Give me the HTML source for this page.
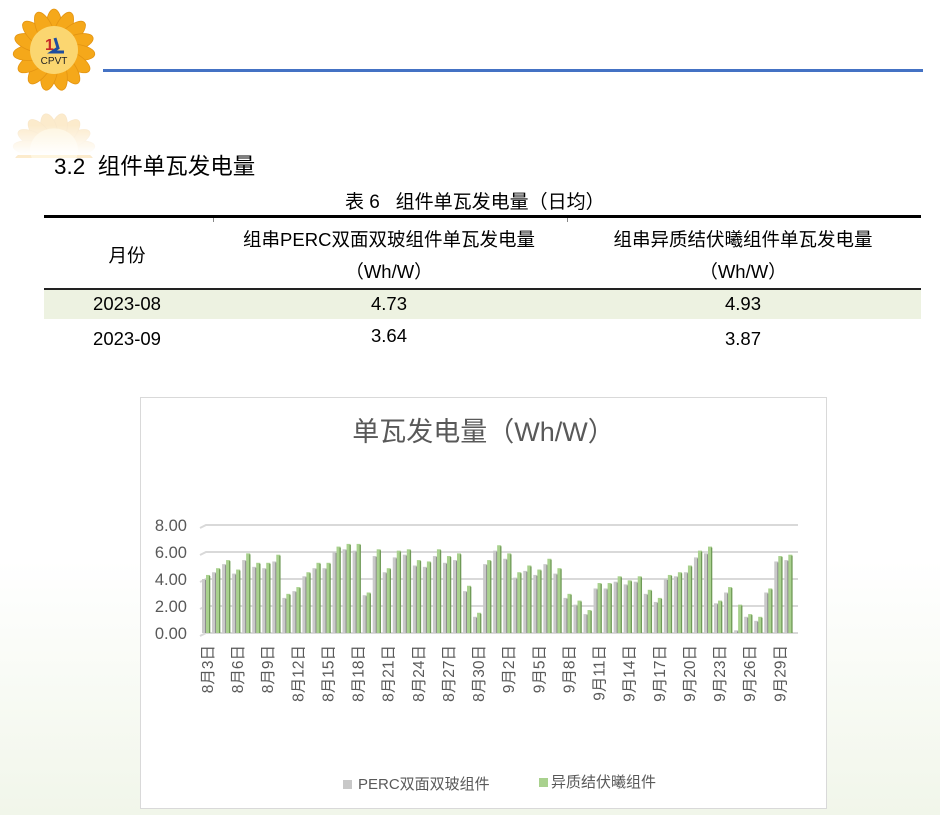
<!DOCTYPE html>
<html><head><meta charset="utf-8"><style>
body{margin:0;width:940px;height:815px;overflow:hidden;position:relative;font-family:"Liberation Sans","Noto Sans CJK SC",sans-serif;background:linear-gradient(#fff 0,#fff 560px,#f1f6ea 815px);}
.a{position:absolute;white-space:nowrap}
</style></head><body>
<svg class="a" style="left:10px;top:8px" width="92" height="150" viewBox="0 0 92 150">
<defs><g id="fl">
<g fill="#f5a81a" stroke="#e39412" stroke-width="0.8">
<ellipse rx="8" ry="19" transform="rotate(0) translate(0,-22)"/><ellipse rx="8" ry="19" transform="rotate(24) translate(0,-22)"/><ellipse rx="8" ry="19" transform="rotate(48) translate(0,-22)"/><ellipse rx="8" ry="19" transform="rotate(72) translate(0,-22)"/><ellipse rx="8" ry="19" transform="rotate(96) translate(0,-22)"/><ellipse rx="8" ry="19" transform="rotate(120) translate(0,-22)"/><ellipse rx="8" ry="19" transform="rotate(144) translate(0,-22)"/><ellipse rx="8" ry="19" transform="rotate(168) translate(0,-22)"/><ellipse rx="8" ry="19" transform="rotate(192) translate(0,-22)"/><ellipse rx="8" ry="19" transform="rotate(216) translate(0,-22)"/><ellipse rx="8" ry="19" transform="rotate(240) translate(0,-22)"/><ellipse rx="8" ry="19" transform="rotate(264) translate(0,-22)"/><ellipse rx="8" ry="19" transform="rotate(288) translate(0,-22)"/><ellipse rx="8" ry="19" transform="rotate(312) translate(0,-22)"/><ellipse rx="8" ry="19" transform="rotate(336) translate(0,-22)"/>
</g>
<circle r="24" fill="#fbd670"/></g></defs>
<g transform="translate(44,42)"><use href="#fl"/>
<text x="-9" y="0" font-size="16" font-weight="bold" fill="#c62828" font-family="Liberation Sans">1</text>
<path d="M1,-12 L4,-2 L-2,2 L10,2" stroke="#1f4e9e" stroke-width="3" fill="none"/>
<text x="0" y="14" font-size="10" text-anchor="middle" fill="#222" font-family="Liberation Sans">CPVT</text>
</g>
<g transform="translate(44,142) scale(1,-0.9)" opacity="0.22"><use href="#fl"/></g>
<rect x="0" y="118" width="92" height="40" fill="url(#none)" opacity="0"/>
</svg>
<div class="a" style="left:0;top:125px;width:110px;height:30px;background:linear-gradient(rgba(255,255,255,0),#fff)"></div>
<div class="a" style="left:103px;top:69px;width:820px;height:3px;background:#4472c4"></div>
<div class="a" style="left:54px;top:149px;font-size:22.5px;color:#000">3.2&nbsp; 组件单瓦发电量</div>
<div class="a" style="left:345px;top:187px;font-size:19px">表 6 &nbsp; 组件单瓦发电量（日均）</div>
<div class="a" style="left:44px;top:215px;width:877px;height:3px;background:#000"></div>
<div class="a" style="left:44px;top:288px;width:877px;height:2px;background:#222"></div>
<div class="a" style="left:44px;top:290px;width:877px;height:29px;background:#edf2e1"></div>
<div class="a" style="left:213px;top:218px;width:1px;height:4px;background:#888"></div>
<div class="a" style="left:567px;top:218px;width:1px;height:4px;background:#888"></div>
<div class="a" style="left:84px;top:242px;width:86px;text-align:center;font-size:18.5px">月份</div>
<div class="a" style="left:214px;top:224px;width:350px;text-align:center;font-size:18.5px;line-height:32px">组串PERC双面双玻组件单瓦发电量<br>（Wh/W）</div>
<div class="a" style="left:568px;top:224px;width:350px;text-align:center;font-size:18.5px;line-height:32px">组串异质结伏曦组件单瓦发电量<br>（Wh/W）</div>
<div class="a" style="left:84px;top:293px;width:86px;text-align:center;font-size:18.5px">2023-08</div>
<div class="a" style="left:84px;top:328px;width:86px;text-align:center;font-size:18.5px">2023-09</div>
<div class="a" style="left:214px;top:293px;width:350px;text-align:center;font-size:18.5px">4.73</div>
<div class="a" style="left:214px;top:325px;width:350px;text-align:center;font-size:18.5px">3.64</div>
<div class="a" style="left:568px;top:293px;width:350px;text-align:center;font-size:18.5px">4.93</div>
<div class="a" style="left:568px;top:328px;width:350px;text-align:center;font-size:18.5px">3.87</div>
<div class="a" style="left:140px;top:397px;width:685px;height:410px;border:1px solid #d9d9d9;background:#fff"></div>
<div class="a" style="left:140px;top:410px;width:687px;text-align:center;font-size:27px;color:#595959">单瓦发电量（Wh/W）</div>
<svg class="a" id="ch" style="left:0;top:0" width="940" height="815"></svg>
<div class="a" style="left:343px;top:773px;font-size:15px;color:#595959"><span style="display:inline-block;width:9px;height:9px;background:#c8c8c8;margin-right:6px"></span>PERC双面双玻组件</div>
<div class="a" style="left:539px;top:771px;font-size:15px;color:#595959"><span style="display:inline-block;width:9px;height:9px;background:#a9d18e;margin-right:3px"></span>异质结伏曦组件</div>
<script>
var d=[[4.0,4.3],[4.5,4.8],[5.1,5.4],[4.4,4.7],[5.4,5.9],[4.9,5.2],[4.8,5.2],[5.3,5.8],[2.6,2.9],[3.1,3.4],[4.2,4.5],[4.8,5.2],[4.8,5.2],[6.0,6.4],[6.2,6.6],[6.1,6.6],[2.8,3.0],[5.7,6.2],[4.5,4.8],[5.6,6.1],[5.8,6.2],[5.0,5.4],[4.9,5.3],[5.7,6.2],[5.2,5.7],[5.4,5.9],[3.1,3.5],[1.2,1.5],[5.1,5.4],[6.1,6.5],[5.5,5.9],[4.1,4.5],[4.6,5.0],[4.3,4.7],[5.1,5.5],[4.4,4.8],[2.6,2.9],[2.1,2.4],[1.4,1.7],[3.3,3.7],[3.3,3.7],[3.8,4.2],[3.6,3.9],[3.8,4.2],[2.9,3.2],[2.3,2.6],[4.0,4.3],[4.2,4.5],[4.5,5.0],[5.6,6.1],[5.9,6.4],[2.2,2.4],[3.0,3.4],[0.2,2.1],[1.2,1.4],[0.9,1.2],[3.0,3.3],[5.3,5.7],[5.4,5.8]];
var s='',z=633,k=13.5;
for(var i=0;i<5;i++){var y=z-i*2*k;s+='<polyline points="200,'+(y+3)+' 206,'+y+' 798,'+y+'" stroke="#d9d9d9" stroke-width="2" fill="none"/>';
s+='<text x="187" y="'+(y+6)+'" font-size="16.5" fill="#595959" text-anchor="end" font-family="Liberation Sans">'+(i*2).toFixed(2)+'</text>';}
for(var i=0;i<59;i++){var c=207+i*10.04,g=d[i][0],r=d[i][1];
s+='<rect x="'+(c-5)+'" y="'+(z-g*k)+'" width="4" height="'+(g*k)+'" fill="#c9c9c9"/><rect x="'+(c-2)+'" y="'+(z-g*k+1)+'" width="1.3" height="'+(g*k-1)+'" fill="#8c8c8c"/>';
s+='<rect x="'+(c-1)+'" y="'+(z-r*k)+'" width="4" height="'+(r*k)+'" fill="#a9d18e"/><rect x="'+(c+2)+'" y="'+(z-r*k+1)+'" width="1.3" height="'+(r*k-1)+'" fill="#6f9a57"/>';}
var m=['8月3日','8月6日','8月9日','8月12日','8月15日','8月18日','8月21日','8月24日','8月27日','8月30日','9月2日','9月5日','9月8日','9月11日','9月14日','9月17日','9月20日','9月23日','9月26日','9月29日'];
for(var j=0;j<m.length;j++){var x=207+j*3*10.04+6;s+='<text transform="translate('+x+',645) rotate(-90)" font-size="15.5" fill="#595959" text-anchor="end" font-family="Liberation Sans,Noto Sans CJK SC">'+m[j]+'</text>';}
document.getElementById('ch').innerHTML=s;
</script>
</body></html>
